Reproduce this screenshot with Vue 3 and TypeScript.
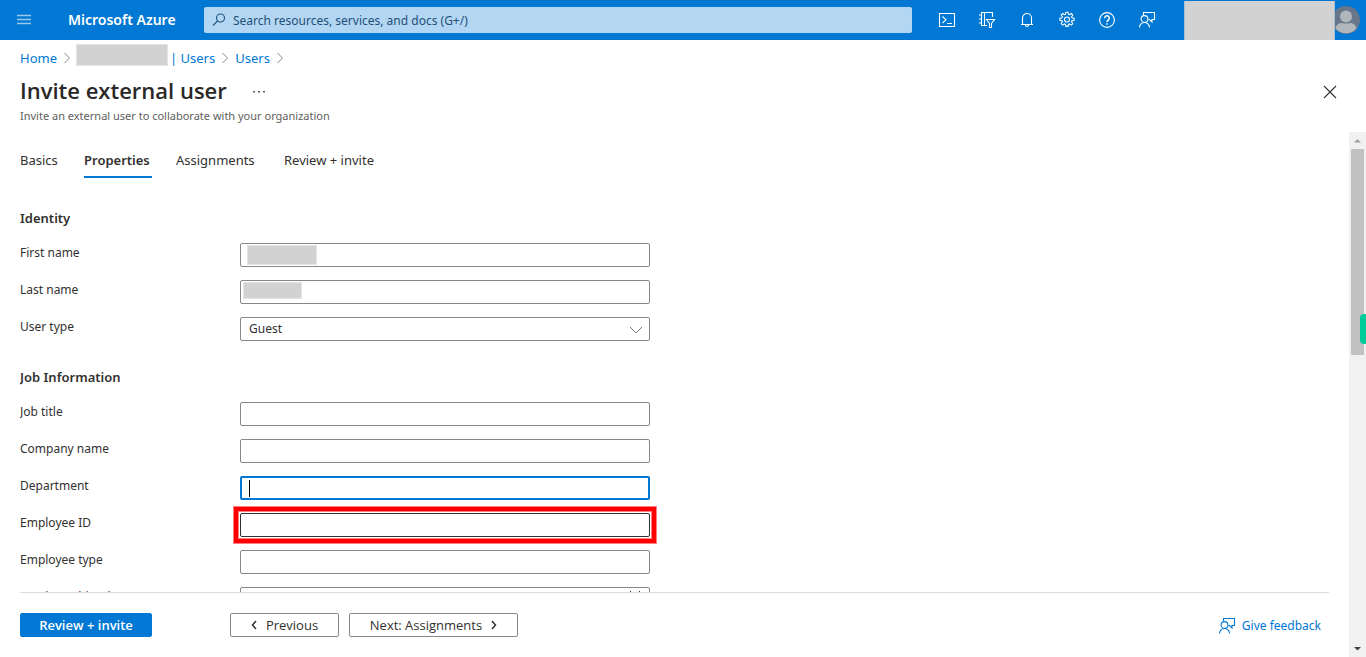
<script setup lang="ts">
import { ref } from 'vue'

interface Field {
  id: string
  label: string
  state?: 'focused' | 'marked'
  mask?: 'first' | 'last'
  calendar?: boolean
}

const identity: Field[] = [
  { id: 'first-name', label: 'First name', mask: 'first' },
  { id: 'last-name', label: 'Last name', mask: 'last' },
]

const job: Field[] = [
  { id: 'job-title', label: 'Job title' },
  { id: 'company-name', label: 'Company name' },
  { id: 'department', label: 'Department', state: 'focused' },
  { id: 'employee-id', label: 'Employee ID', state: 'marked' },
  { id: 'employee-type', label: 'Employee type' },
  { id: 'employee-hire-date', label: 'Employee hire date', calendar: true },
]

const tabs = ['Basics', 'Properties', 'Assignments', 'Review + invite']
const activeTab = ref('Properties')
const userType = ref('Guest')
</script>

<template>
  <div class="portal">
    <header class="topbar">
      <button class="menu" aria-label="Show portal menu">
        <svg width="16" height="12" viewBox="0 0 16 12"><path d="M1 1.5h14M1 5.5h14M1 9.5h14" stroke="currentColor" stroke-width="1.4" /></svg>
      </button>
      <a class="brand" href="#">Microsoft Azure</a>
      <label class="search">
        <svg width="14" height="14" viewBox="0 0 14 14" fill="none" stroke="currentColor" stroke-width="1.1"><circle cx="8.5" cy="5" r="4" /><path d="M5.6 7.9 1 12.5" /></svg>
        <input type="text" aria-label="Search" placeholder="Search resources, services, and docs (G+/)" />
      </label>
      <nav class="tools">
        <button aria-label="Cloud Shell">
          <svg width="18" height="16" viewBox="0 0 18 16"><path d="M1.5 1.5h15v13h-15zM4.5 4.5 8 7.8 4.5 11M9 11.5h5" /></svg>
        </button>
        <button aria-label="Directories and subscriptions">
          <svg width="18" height="18" viewBox="0 0 18 18"><path d="M14.5 6V1.500h-11v13H9M6.500 1.500v13M1 4h2.500M1 8h2.500M1 12h2.500M8.500 8.500h8l-3 4V16.500h-2v-4z" /></svg>
        </button>
        <button aria-label="Notifications">
          <svg width="14" height="16" viewBox="0 0 14 16"><path d="M1 12.500h12M2.500 12.500V6a4.500 4.500 0 0 1 9 0v6.500M5.500 13a1.500 1.500 0 0 0 3 0" /></svg>
        </button>
        <button aria-label="Settings">
          <svg width="18" height="18" viewBox="0 0 18 18"><path d="M7.500 3.300 7.900 1.200h2.200l.4 2.100 1 .4 1.800-1.200 1.500 1.500-1.200 1.800.4 1 2.100.4v2.200l-2.100.4-.4 1 1.200 1.800-1.500 1.500-1.800-1.200-1 .4-.4 2.100H7.900l-.4-2.100-1-.4-1.800 1.200-1.500-1.500 1.200-1.800-.4-1-2.100-.4V7.200l2.100-.4.4-1-1.200-1.800 1.500-1.500 1.800 1.200z" /><circle cx="9" cy="8.500" r="2.500" /></svg>
        </button>
        <button aria-label="Help">
          <svg width="18" height="18" viewBox="0 0 18 18"><circle cx="9" cy="9" r="7.400" /><path d="M6.700 7.200a2.300 2.300 0 1 1 3.700 1.700C9.500 9.600 9 9.900 9 11M9 12.200v1.500" stroke-width="1.500" /></svg>
        </button>
        <button aria-label="Feedback">
          <svg width="18" height="18" viewBox="0 0 18 18"><path d="M5.500 4V1.500h11v7H14v2.500l-2.500-2.500h-1M1.500 16.500a5 5 0 0 1 10 0" /><circle cx="6.500" cy="8" r="3.400" /></svg>
        </button>
      </nav>
      <div class="account"></div>
      <button class="avatar" aria-label="Account">
        <svg width="28" height="28" viewBox="0 0 28 28"><circle cx="14" cy="14" r="14" fill="#67768a" /><circle cx="14" cy="10.500" r="6" fill="#b0b6bb" /><path d="M3.500 22.500c1-4 3.500-5.500 6.500-5.500 1.500.8 6.500.8 8 0 3 0 5.500 1.500 6.500 5.500a14 14 0 0 1-21 0z" fill="#b0b6bb" /></svg>
      </button>
    </header>

    <section class="heading">
      <nav class="crumbs" aria-label="Breadcrumb">
        <a href="#">Home</a>
        <svg class="chev" width="8" height="12" viewBox="0 0 8 12"><path d="M1.500 1 6.500 6l-5 5" /></svg>
        <span class="tenant"></span>
        <a href="#">| Users</a>
        <svg class="chev" width="8" height="12" viewBox="0 0 8 12"><path d="M1.500 1 6.500 6l-5 5" /></svg>
        <a href="#">Users</a>
        <svg class="chev" width="8" height="12" viewBox="0 0 8 12"><path d="M1.500 1 6.500 6l-5 5" /></svg>
      </nav>
      <div class="title-row">
        <h1>Invite external user</h1>
        <button class="more" aria-label="More">
          <svg width="12" height="2" viewBox="0 0 12 2" fill="#555"><path d="M0 0h2v1.500H0zM5 0h2v1.500H5zM10 0h2v1.500h-2z" /></svg>
        </button>
        <button class="close" aria-label="Close">
          <svg width="14" height="14" viewBox="0 0 14 14" fill="none" stroke="#323130" stroke-width="1.100"><path d="m1 1 12 12M13 1 1 13" /></svg>
        </button>
      </div>
      <p class="subtitle">Invite an external user to collaborate with your organization</p>
    </section>

    <div class="body">
      <main class="blade">
        <form class="form" @submit.prevent>
          <div class="tabs" role="tablist">
            <button v-for="t in tabs" :key="t" type="button" role="tab" :aria-selected="t === activeTab" :class="{ active: t === activeTab }" @click="activeTab = t">{{ t }}</button>
          </div>

          <h2>Identity</h2>
          <div v-for="f in identity" :key="f.id" class="row">
            <label :for="f.id">{{ f.label }}</label>
            <div class="control">
              <input :id="f.id" type="text" />
              <span class="mask" :class="f.mask"></span>
            </div>
          </div>
          <div class="row">
            <label for="user-type">User type</label>
            <div class="control">
              <select id="user-type" v-model="userType">
                <option>Guest</option>
                <option>Member</option>
              </select>
              <svg class="arrow" width="12" height="8" viewBox="0 0 12 8"><path d="m0 1 6 6 6-6" fill="none" stroke="#777" /></svg>
            </div>
          </div>

          <h2>Job Information</h2>
          <div v-for="f in job" :key="f.id" class="row">
            <label :for="f.id">{{ f.label }}</label>
            <div class="control" :class="f.state">
              <input :id="f.id" type="text" />
              <span v-if="f.state === 'focused'" class="caret"></span>
              <svg v-if="f.calendar" class="calendar" width="14" height="14" viewBox="0 0 14 14" fill="none" stroke="#323130"><path d="M.5 2.500h13v11H.5zM.5 5.500h13M2.500 0v3M11.500 0v3" /></svg>
            </div>
          </div>
        </form>

        <footer class="actions">
          <button class="primary">Review + invite</button>
          <button class="previous">
            <svg width="6" height="10" viewBox="0 0 6 10"><path d="M5 1 1.500 5 5 9" /></svg>
            Previous
          </button>
          <button class="next">
            Next: Assignments
            <svg width="6" height="10" viewBox="0 0 6 10"><path d="M1 1l3.500 4L1 9" /></svg>
          </button>
          <a class="feedback" href="#">
            <svg width="18" height="18" viewBox="0 0 18 18"><path d="M5.500 4V1.500h11v7H14v2.500l-2.500-2.500h-1M1.500 16.500a5 5 0 0 1 10 0" /><circle cx="6.500" cy="8" r="3.400" /></svg>
            Give feedback
          </a>
        </footer>
      </main>

      <div class="scrollbar" aria-hidden="true">
        <svg width="17" height="17" viewBox="0 0 17 17"><path d="M5 10.500 8.500 7l3.500 3.500z" fill="#a0a0a0" /></svg>
        <div class="track"><div class="thumb"></div></div>
        <svg width="17" height="17" viewBox="0 0 17 17"><path d="M5 7h7l-3.500 3.500z" fill="#444" /></svg>
        <span class="side-tab"></span>
      </div>
    </div>
  </div>
</template>

<style>
body {
  margin: 0;
  background: #fff;
}
</style>

<style scoped>
* {
  box-sizing: border-box;
}
.portal {
  display: flex;
  flex-direction: column;
  height: 100vh;
  overflow: hidden;
  color: #323130;
  font: 12px/20px "Segoe UI", "Noto Sans", "Open Sans", sans-serif;
}
button, input, select {
  font: inherit;
  color: inherit;
}
button {
  display: flex;
  align-items: center;
  justify-content: center;
  padding: 0;
  border: 0;
  background: none;
  white-space: nowrap;
}
a {
  color: #0078d4;
  text-decoration: none;
}
svg {
  flex: none;
}
.topbar {
  display: flex;
  align-items: center;
  flex: none;
  height: 40px;
  background: #0078d4;
  color: #fff;
}
.menu {
  width: 48px;
  height: 40px;
  opacity: .6;
}
.brand {
  width: 156px;
  padding-left: 20px;
  color: #fff;
  font-size: 14px;
  font-weight: 600;
  line-height: 22px;
  white-space: nowrap;
}
.search {
  display: flex;
  flex: 1;
  align-items: center;
  gap: 7px;
  height: 26px;
  padding-left: 8px;
  border-radius: 2px;
  background: #b3d7f2;
  color: #1b4f7e;
}
.search input {
  flex: 1;
  min-width: 0;
  padding: 1px 0 0;
  border: 0;
  outline: 0;
  background: none;
}
.search input::placeholder {
  color: #1f4e79;
  opacity: 1;
}
.tools {
  display: flex;
  margin-left: 15px;
}
.tools button {
  width: 40px;
  height: 40px;
}
.tools svg, .feedback svg {
  fill: none;
  stroke: currentColor;
  stroke-width: 1.1;
}
.account {
  align-self: flex-end;
  width: 151px;
  height: 39px;
  margin-left: 17px;
  border: solid #a4bfd6;
  border-width: 0 1px;
  background: #d2d2d2;
}
.avatar {
  justify-content: flex-end;
  width: 31px;
  height: 40px;
  padding-right: 6px;
  overflow: hidden;
}
.heading {
  flex: none;
  height: 92px;
  padding: 0 20px;
}
.crumbs {
  display: flex;
  align-items: center;
  gap: 6px;
  height: 36px;
  font-size: 13px;
}
.chev {
  fill: none;
  stroke: #8a8886;
}
.tenant {
  width: 92px;
  height: 22px;
  margin: 0 -4px 6px -1px;
  border: 1px solid #e4e4e4;
  background: #d2d2d2;
}
.title-row {
  display: flex;
  align-items: center;
  height: 32px;
}
h1 {
  margin: 0;
  padding-bottom: 4px;
  color: #292827;
  font-family: "Segoe UI", "Open Sans", sans-serif;
  font-size: 22px;
  font-weight: 600;
  line-height: 28px;
}
.more {
  width: 24px;
  height: 24px;
  margin-left: 20px;
}
.close {
  width: 24px;
  height: 24px;
  margin-left: auto;
  margin-right: 4px;
}
.subtitle {
  margin: 0;
  color: #605e5c;
  font-size: 11px;
  line-height: 16px;
}
.body {
  display: flex;
  flex: 1;
  min-height: 0;
}
.blade {
  display: flex;
  flex: 1;
  flex-direction: column;
  min-width: 0;
  padding: 0 20px;
}
.form {
  flex: 1;
  min-height: 0;
  overflow: hidden;
  padding-top: 10px;
}
.tabs {
  display: grid;
  grid-template-columns: 40px 68px 84px auto;
  gap: 24px;
  justify-content: start;
  font-size: 13px;
}
.tabs button {
  justify-content: flex-start;
  height: 36px;
  padding-top: 2px;
  border-bottom: 2px solid transparent;
}
.tabs .active {
  border-color: #0078d4;
  font-weight: 600;
}
h2 {
  margin: 26px 0 15px;
  font-size: 13px;
  font-weight: 600;
  line-height: 20px;
}
.tabs + h2 {
  margin-top: 30px;
}
.row {
  display: grid;
  grid-template-columns: 220px 410px;
  height: 24px;
  margin-bottom: 13px;
}
.row label {
  align-self: start;
  line-height: 20px;
}
.control {
  position: relative;
  height: 24px;
}
.control input, .control select {
  display: block;
  width: 100%;
  height: 24px;
  padding: 0 8px;
  border: 1px solid #8a8886;
  border-radius: 2px;
  outline: 0;
  background: #fff;
  appearance: none;
}
.focused input {
  border: 2px solid #0078d4;
}
.marked {
  box-shadow: 0 0 0 1px #fff, 0 0 0 2px #ff8080, 0 0 0 6px #f00, 0 0 0 7px #ff8080;
}
.marked input {
  border-color: #323130;
}
.mask {
  position: absolute;
  border: 1px solid #e4e4e4;
  background: #d2d2d2;
}
.mask.first {
  left: 7px;
  top: 2px;
  width: 70px;
  height: 20px;
}
.mask.last {
  left: 3px;
  top: 2px;
  width: 59px;
  height: 17px;
}
.caret {
  position: absolute;
  left: 9px;
  top: 4px;
  width: 1px;
  height: 17px;
  background: #000;
}
.arrow {
  position: absolute;
  right: 8px;
  top: 9px;
}
.calendar {
  position: absolute;
  right: 8px;
  top: 4px;
}
.row:has(+ h2) {
  margin-bottom: 0;
}
.actions {
  display: flex;
  flex: none;
  align-items: flex-start;
  height: 65px;
  padding-top: 20px;
  border-top: 1px solid #dcdcdc;
}
.actions button {
  height: 24px;
  border: 1px solid #8a8886;
  border-radius: 2px;
  font-family: "Segoe UI", "Open Sans", sans-serif;
  font-size: 13px;
}
.actions button svg {
  fill: none;
  stroke: #323130;
  stroke-width: 1.5;
}
.actions .primary {
  width: 132px;
  border-color: #0078d4;
  background: #0078d4;
  color: #fff;
  font-weight: 600;
}
.actions .previous {
  gap: 9px;
  width: 109px;
  margin-left: 78px;
}
.actions .next {
  gap: 9px;
  width: 169px;
  margin-left: 10px;
}
.feedback {
  display: flex;
  align-items: center;
  gap: 6px;
  height: 26px;
  margin-left: auto;
  padding-right: 8px;
}
.scrollbar {
  position: relative;
  display: flex;
  flex: none;
  flex-direction: column;
  width: 17px;
  background: #f1f1f1;
}
.track {
  flex: 1;
  padding: 0 2px;
}
.thumb {
  height: 42%;
  background: #c1c1c1;
}
.side-tab {
  position: absolute;
  right: 0;
  top: 182px;
  width: 6px;
  height: 30px;
  border-radius: 4px 0 0 4px;
  background: #0c9;
}
</style>
